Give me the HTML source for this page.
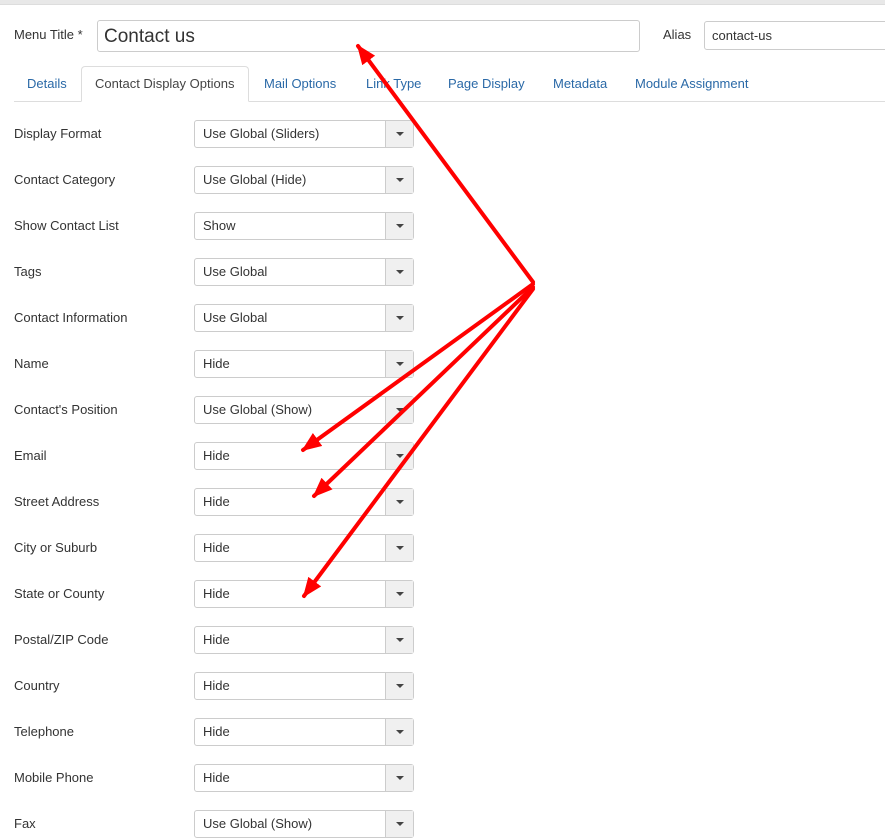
<!DOCTYPE html><html><head><style>
body{margin:0;width:885px;height:826px;overflow:hidden;background:#fff;font-family:"Liberation Sans",sans-serif;font-size:13px;color:#333;position:relative}
.top{position:absolute;left:0;top:0;width:885px;height:4px;background:#e8e8e8;border-bottom:1px solid #ddd}
.abs{position:absolute}
.inp{position:absolute;border:1px solid #ccc;border-radius:3px;background:#fff;box-sizing:border-box}
.tab{position:absolute;top:76px;color:#2a69a7;font-size:13px}
.lbl{position:absolute;left:14px;font-size:13px}
.sel{position:absolute;left:194px;width:220px;height:28px;border:1px solid #ccc;border-radius:3px;box-sizing:border-box;background:#fff}
.sel span{position:absolute;left:8px;top:5px}
.sel b{position:absolute;right:0;top:0;width:27px;height:26px;background:#f0f0f0;border-left:1px solid #ccc}
.sel b:after{content:"";position:absolute;left:10px;top:11px;border-left:4px solid transparent;border-right:4px solid transparent;border-top:4px solid #444}
</style></head><body>
<div class="top"></div>
<div class="abs" style="left:14px;top:27px">Menu Title *</div>
<div class="inp" style="left:97px;top:20px;width:543px;height:32px"><span class="abs" style="left:6px;top:5px;font-size:19px;color:#333">Contact us</span></div>
<div class="abs" style="left:663px;top:27px">Alias</div>
<div class="inp" style="left:704px;top:21px;width:190px;height:29px"><span class="abs" style="left:7px;top:6px">contact-us</span></div>
<div class="abs" style="left:14px;top:101px;width:871px;border-top:1px solid #ddd"></div>
<div class="abs" style="left:81px;top:66px;width:168px;height:36px;border:1px solid #ddd;border-bottom:1px solid #fff;border-radius:4px 4px 0 0;background:#fff;box-sizing:border-box"></div>
<div class="tab" style="left:27px">Details</div>
<div class="tab" style="left:95px;color:#444">Contact Display Options</div>
<div class="tab" style="left:264px">Mail Options</div>
<div class="tab" style="left:366px">Link Type</div>
<div class="tab" style="left:448px">Page Display</div>
<div class="tab" style="left:553px">Metadata</div>
<div class="tab" style="left:635px">Module Assignment</div>
<div id="rows"></div>
<script>
var d=[["Display Format","Use Global (Sliders)"],["Contact Category","Use Global (Hide)"],["Show Contact List","Show"],["Tags","Use Global"],["Contact Information","Use Global"],["Name","Hide"],["Contact's Position","Use Global (Show)"],["Email","Hide"],["Street Address","Hide"],["City or Suburb","Hide"],["State or County","Hide"],["Postal/ZIP Code","Hide"],["Country","Hide"],["Telephone","Hide"],["Mobile Phone","Hide"],["Fax","Use Global (Show)"]];
var h="";d.forEach(function(r,i){var y=120+46*i;h+='<div class="lbl" style="top:'+(y+6)+'px">'+r[0]+'</div><div class="sel" style="top:'+y+'px"><span>'+r[1]+'</span><b></b></div>';});
document.getElementById("rows").innerHTML=h;
</script>
<svg class="abs" style="left:0;top:0" width="885" height="826">
<defs><marker id="a" markerWidth="5" markerHeight="4" refX="4.5" refY="2" orient="auto" markerUnits="strokeWidth"><path d="M0,0L5,2L0,4z" fill="#f00"/></marker></defs>
<g stroke="#f00" stroke-width="4" fill="none" stroke-linecap="round">
<line x1="533" y1="282" x2="358" y2="46" marker-end="url(#a)"/>
<line x1="533" y1="284" x2="303" y2="450" marker-end="url(#a)"/>
<line x1="533" y1="287" x2="314" y2="496" marker-end="url(#a)"/>
<line x1="533" y1="289" x2="304" y2="596" marker-end="url(#a)"/>
</g></svg>
</body></html>
